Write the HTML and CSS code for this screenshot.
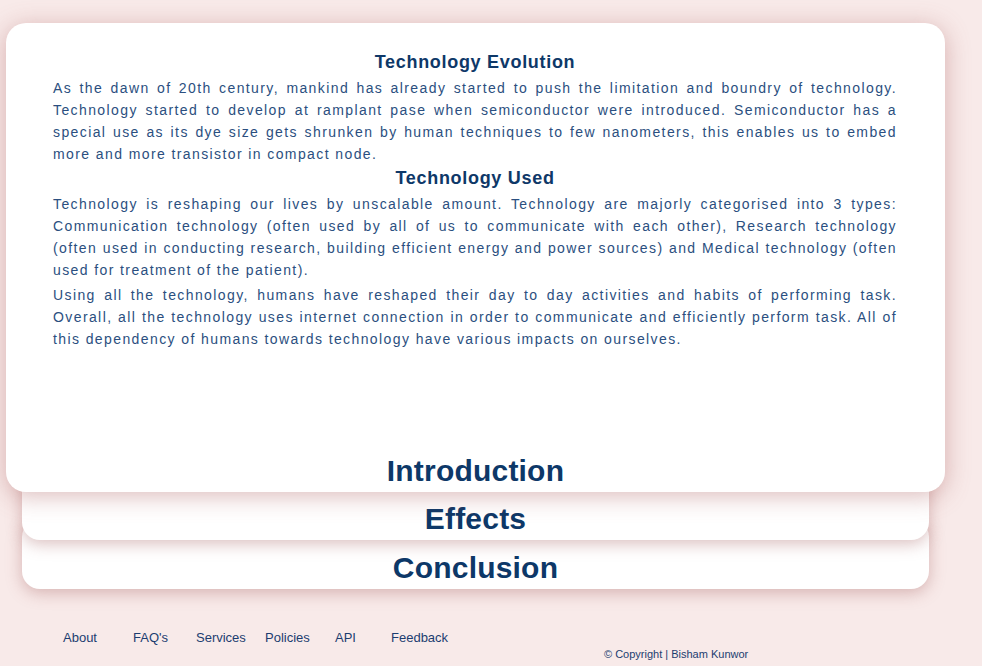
FILE: index.html
```html
<!DOCTYPE html>
<html lang="en">
<head>
<meta charset="utf-8">
<title>Technology</title>
<link rel="stylesheet" href="styles.css">
</head>
<body>
<main class="stack">
  <section class="card card-main">
    <div class="content">
      <h2 class="sub">Technology Evolution</h2>
      <p class="text">As the dawn of 20th century, mankind has already started to push the limitation and boundry of technology. Technology started to develop at ramplant pase when semiconductor were introduced. Semiconductor has a special use as its dye size gets shrunken by human techniques to few nanometers, this enables us to embed more and more transistor in compact node.</p>
      <h2 class="sub">Technology Used</h2>
      <p class="text">Technology is reshaping our lives by unscalable amount. Technology are majorly categorised into 3 types: Communication technology (often used by all of us to communicate with each other), Research technology (often used in conducting research, building efficient energy and power sources) and Medical technology (often used for treatment of the patient).</p>
      <p class="text">Using all the technology, humans have reshaped their day to day activities and habits of performing task. Overall, all the technology uses internet connection in order to communicate and efficiently perform task. All of this dependency of humans towards technology have various impacts on ourselves.</p>
    </div>
    <h1 class="title">Introduction</h1>
  </section>
  <section class="card card-sub card-effects">
    <h1 class="title">Effects</h1>
  </section>
  <section class="card card-sub card-conclusion">
    <h1 class="title">Conclusion</h1>
  </section>
</main>
<footer class="footer">
  <nav class="links">
    <a href="#">About</a>
    <a href="#">FAQ's</a>
    <a href="#">Services</a>
    <a href="#">Policies</a>
    <a href="#">API</a>
    <a href="#">Feedback</a>
  </nav>
  <p class="copy">© Copyright | Bisham Kunwor</p>
</footer>
</body>
</html>
```
FILE: styles.css
```css
html, body {
  margin: 0;
  padding: 0;
}
body {
  background: #f8eae9;
  font-family: "Liberation Sans", Arial, sans-serif;
  width: 982px;
  height: 666px;
  overflow: hidden;
}
.stack {
  padding: 23px 0 0 6px;
  display: flex;
  flex-direction: column;
}
.card {
  background: #ffffff;
  border-radius: 20px;
  display: flex;
  flex-direction: column;
  justify-content: flex-end;
  box-sizing: border-box;
  position: relative;
  padding-bottom: 3px;
}
.card-main {
  width: 939px;
  height: 469px;
  z-index: 3;
  box-shadow: 0 4px 24px rgba(170, 90, 90, 0.42);
}
.card-sub {
  width: 907px;
  height: 70px;
  margin-left: 16px;
  border-radius: 18px;
  box-shadow: 0 4px 16px rgba(160, 90, 90, 0.38);
}
.card-effects {
  margin-top: -22px;
  z-index: 2;
}
.card-conclusion {
  margin-top: -21px;
  z-index: 1;
}
.content {
  padding: 28px 48px 0 47px;
  flex: 1;
}
.sub {
  margin: 0;
  text-align: center;
  font-size: 18px;
  line-height: 22px;
  font-weight: bold;
  color: #0e3868;
  letter-spacing: 0.7px;
}
.sub + .text {
  margin-top: 4px;
}
.text {
  margin: 3px 0 2px;
  font-size: 14px;
  line-height: 22px;
  letter-spacing: 1.4px;
  text-align: justify;
  color: #2b4f80;
}
.title {
  margin: 0;
  text-align: center;
  font-size: 30px;
  line-height: 36px;
  font-weight: bold;
  color: #0d3868;
  letter-spacing: 0.2px;
}
.footer {
  padding: 41px 0 0 63px;
}
.links {
  display: grid;
  grid-template-columns: 70px 63px 69px 70px 56px auto;
  justify-content: start;
}
.links a {
  font-size: 13px;
  line-height: 16px;
  color: #1c3d70;
  text-decoration: none;
}
.copy {
  margin: 1px 0 0 541px;
  font-size: 11px;
  line-height: 14px;
  color: #1c3d70;
}
```
